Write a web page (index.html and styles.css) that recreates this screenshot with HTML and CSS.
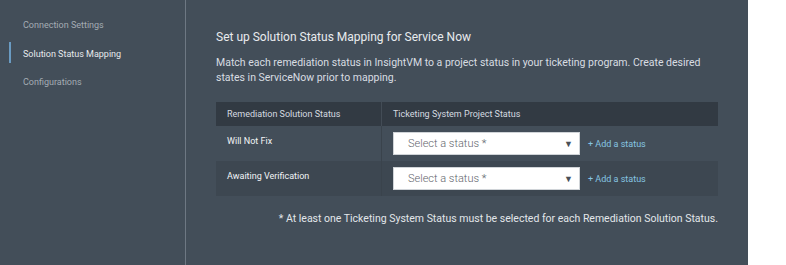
FILE: index.html
```html
<!DOCTYPE html>
<html>
<head>
<meta charset="utf-8">
<link rel="stylesheet" href="styles.css">
</head>
<body>
<div class="app">
  <nav class="sidebar">
    <div class="nav-item">Connection Settings</div>
    <div class="nav-item active">Solution Status Mapping</div>
    <div class="nav-item">Configurations</div>
  </nav>
  <main class="content">
    <h1 class="title">Set up Solution Status Mapping for Service Now</h1>
    <p class="desc">Match each remediation status in InsightVM to a project status in your ticketing program. Create desired states in ServiceNow prior to mapping.</p>
    <div class="table">
      <div class="row head">
        <div class="cell c1">Remediation Solution Status</div>
        <div class="cell c2">Ticketing System Project Status</div>
      </div>
      <div class="row">
        <div class="cell c1 label">Will Not Fix</div>
        <div class="cell c2">
          <div class="select"><span>Select a status *</span><span class="arrow">&#9660;</span></div>
          <a class="add">+ Add a status</a>
        </div>
      </div>
      <div class="row alt">
        <div class="cell c1 label">Awaiting Verification</div>
        <div class="cell c2">
          <div class="select"><span>Select a status *</span><span class="arrow">&#9660;</span></div>
          <a class="add">+ Add a status</a>
        </div>
      </div>
    </div>
    <p class="note">* At least one Ticketing System Status must be selected for each Remediation Solution Status.</p>
  </main>
</div>
</body>
</html>
```
FILE: styles.css
```css
html, body {
  margin: 0;
  padding: 0;
  background: #ffffff;
  font-family: Roboto, "Liberation Sans", sans-serif;
}
.app {
  display: flex;
  width: 748px;
  height: 265px;
  background: #434e59;
}
.sidebar {
  flex: 0 0 185px;
  border-right: 1px solid #6e7883;
  padding-top: 18px;
}
.nav-item {
  position: relative;
  font-size: 9px;
  color: #a4acb4;
  padding-left: 23px;
  height: 28.5px;
  line-height: 14px;
}
.nav-item.active {
  color: #e6e9ec;
}
.nav-item.active::before {
  content: "";
  position: absolute;
  left: 9px;
  top: -5px;
  width: 2px;
  height: 21px;
  background: #6a9bc2;
}
.content {
  flex: 1;
  min-width: 0;
  padding: 29px 30px 0 30px;
}
.title {
  margin: 0;
  font-size: 12px;
  font-weight: 400;
  color: #e8ebee;
  line-height: 16px;
}
.desc {
  margin: 10px 0 0 0;
  font-size: 10.5px;
  line-height: 15px;
  color: #d8dde2;
  width: 502px;
}
.table {
  margin-top: 17px;
  width: 502px;
}
.row {
  display: flex;
  height: 35px;
}
.row.head {
  height: 24px;
  background: #323a43;
  font-size: 9px;
  color: #d6dbe0;
}
.row.alt {
  background: #3d4751;
}
.cell {
  display: flex;
  align-items: center;
}
.c1 {
  width: 154px;
  padding-left: 11px;
  border-right: 1px solid #3a434c;
}
.head .c1 {
  border-right-color: #434c56;
}
.c2 {
  flex: 1;
  padding-left: 11px;
}
.label {
  align-items: flex-start;
  padding-top: 10px;
  font-size: 9px;
  font-weight: 400;
  color: #f2f4f6;
}
.select {
  width: 187px;
  height: 23px;
  background: #ffffff;
  border: 1px solid #d0d4d8;
  box-sizing: border-box;
  display: flex;
  align-items: center;
  justify-content: space-between;
  padding: 0 6px 0 14px;
  font-size: 11px;
  font-weight: 300;
  color: #5f656c;
}
.arrow {
  font-size: 9px;
  color: #4a5057;
}
.add {
  margin-left: 8px;
  font-size: 9px;
  color: #86c5e2;
}
.note {
  margin: 16px 0 0 0;
  width: 502px;
  text-align: right;
  font-size: 10.5px;
  color: #e2e6ea;
}
```
